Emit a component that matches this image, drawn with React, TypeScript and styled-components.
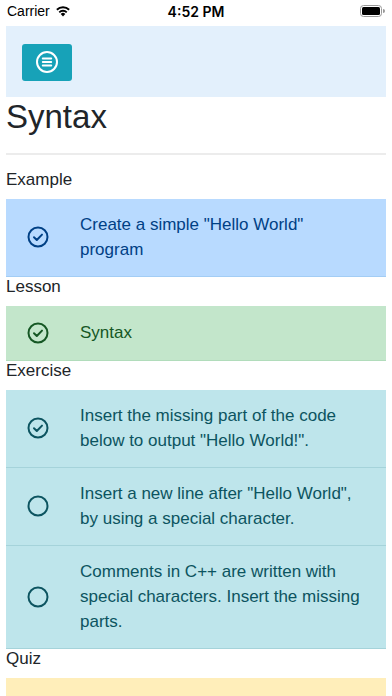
import styled, { createGlobalStyle } from 'styled-components';

const GlobalStyle = createGlobalStyle`
  html, body {
    margin: 0;
    padding: 0;
    background: #ffffff;
  }
  body {
    font-family: 'Liberation Sans', Arial, sans-serif;
    color: #212529;
  }
`;

type Tone = 'primary' | 'success' | 'info' | 'warning';

const tones: Record<Tone, { bg: string; fg: string; line: string }> = {
  primary: { bg: '#b8daff', fg: '#004085', line: '#a3cdf5' },
  success: { bg: '#c3e6cb', fg: '#155724', line: '#b1dcbb' },
  info: { bg: '#bee5eb', fg: '#0c5460', line: '#a5d3da' },
  warning: { bg: '#ffeeba', fg: '#856404', line: '#f5e0a0' },
};

interface Item {
  text: string;
  done?: boolean;
}

const sections: { title: string; tone: Tone; items: Item[] }[] = [
  {
    title: 'Example',
    tone: 'primary',
    items: [{ text: 'Create a simple "Hello World" program', done: true }],
  },
  {
    title: 'Lesson',
    tone: 'success',
    items: [{ text: 'Syntax', done: true }],
  },
  {
    title: 'Exercise',
    tone: 'info',
    items: [
      { text: 'Insert the missing part of the code below to output "Hello World!".', done: true },
      { text: 'Insert a new line after "Hello World", by using a special character.', done: false },
      { text: 'Comments in C++ are written with special characters. Insert the missing parts.', done: false },
    ],
  },
  {
    // still loading: the row is drawn but has no content yet
    title: 'Quiz',
    tone: 'warning',
    items: [{ text: '' }],
  },
];

function WifiIcon() {
  return (
    <svg width="16" height="12" viewBox="0 0 16 12">
      <path d="M8 11.5l2.3-2.6a3.3 3.3 0 0 0-4.6 0z" fill="#000" />
      <path d="M3.6 6.7a6.2 6.2 0 0 1 8.8 0l-1.3 1.4a4.3 4.3 0 0 0-6.2 0z" fill="#000" />
      <path d="M1.2 4.1a9.6 9.6 0 0 1 13.6 0l-1.3 1.4a7.7 7.7 0 0 0-11 0z" fill="#000" />
    </svg>
  );
}

function BatteryIcon() {
  return (
    <svg width="25" height="12" viewBox="0 0 25 12">
      <rect x="0.5" y="0.5" width="21" height="11" rx="3" fill="none" stroke="#999" />
      <rect x="2" y="2" width="18" height="8" rx="1.5" fill="#000" />
      <path d="M23 4v4a2 2 0 0 0 0-4z" fill="#999" />
    </svg>
  );
}

function MenuIcon() {
  return (
    <svg width="24" height="24" viewBox="0 0 24 24" fill="none" stroke="#fff" strokeLinecap="round">
      <circle cx="12" cy="12" r="10" strokeWidth="2" />
      <path d="M7.8 8.5h8.4M7.8 12h8.4M7.8 15.5h8.4" strokeWidth="2" />
    </svg>
  );
}

function StatusIcon({ done, color }: { done: boolean; color: string }) {
  return (
    <svg width="24" height="24" viewBox="0 0 24 24" fill="none" stroke={color} strokeWidth="2" strokeLinecap="round" strokeLinejoin="round">
      <circle cx="12" cy="12" r="9.5" />
      {done && <path d="M8 12.3l2.8 2.7 5.2-5.4" />}
    </svg>
  );
}

function App() {
  return (
    <>
      <GlobalStyle />
      <Screen>
        <StatusBar>
          <Carrier>
            Carrier
            <WifiIcon />
          </Carrier>
          <Clock>4:52 PM</Clock>
          <BatteryBox>
            <BatteryIcon />
          </BatteryBox>
        </StatusBar>

        <Page>
          <TopBar>
            <MenuButton>
              <MenuIcon />
            </MenuButton>
          </TopBar>

          <Title>Syntax</Title>
          <Divider />

          {sections.map((section) => (
            <Section key={section.title}>
              <SectionLabel>{section.title}</SectionLabel>
              <List>
                {section.items.map((item) => (
                  <Row key={item.text} tone={section.tone}>
                    <IconCell>
                      {item.done !== undefined && (
                        <StatusIcon done={item.done} color={tones[section.tone].fg} />
                      )}
                    </IconCell>
                    <RowText>{item.text}</RowText>
                  </Row>
                ))}
              </List>
            </Section>
          ))}
        </Page>
      </Screen>
    </>
  );
}

const Screen = styled.div`
  width: 392px;
  height: 696px;
  overflow: hidden;
  background: #fff;
`;

const StatusBar = styled.div`
  height: 26px;
  display: grid;
  grid-template-columns: 1fr auto 1fr;
  align-items: center;
  padding: 0 7px;
  font-family: 'Liberation Sans', Arial, sans-serif;
  font-size: 14px;
  color: #000;
  box-sizing: border-box;
`;

const Carrier = styled.div`
  display: flex;
  align-items: center;
  gap: 5px;
  margin-top: -4px;

  svg {
    margin-top: -1px;
  }
`;

const Clock = styled.div`
  font-family: Inter, 'Liberation Sans', sans-serif;
  font-weight: 600;
  font-size: 14px;
  margin-top: -4px;
`;

const BatteryBox = styled.div`
  display: flex;
  justify-content: flex-end;
  margin-top: -4px;
`;

const Page = styled.div`
  padding: 0 6px;
`;

const TopBar = styled.div`
  height: 71px;
  background: #e3f0fc;
  display: flex;
  align-items: center;
  padding: 0 16px;
`;

const MenuButton = styled.button`
  width: 50px;
  height: 37px;
  border: none;
  border-radius: 3px;
  background: #17a2b8;
  display: flex;
  align-items: center;
  justify-content: center;
  padding: 0;
  margin-top: 1px;
`;

const Title = styled.h1`
  margin: 0;
  padding-top: 1px;
  font-family: 'Liberation Sans', Arial, sans-serif;
  font-size: 33px;
  font-weight: 400;
  line-height: 38px;
  color: #212529;
`;

const Divider = styled.hr`
  margin: 17px 0 15px;
  border: none;
  border-top: 2px solid #ececec;
`;

const Section = styled.section`
  display: flex;
  flex-direction: column;
`;

const SectionLabel = styled.div`
  font-size: 17px;
  line-height: 20px;
  color: #212529;
  margin-bottom: 9px;
`;

const List = styled.div`
  display: flex;
  flex-direction: column;
`;

interface IRow {
  tone: Tone;
}

const Row = styled.div<IRow>`
  display: flex;
  align-items: center;
  box-sizing: border-box;
  min-height: 55px;
  padding: 13px 0 14px;
  background: ${(props) => tones[props.tone].bg};
  color: ${(props) => tones[props.tone].fg};
  border-bottom: 1px solid ${(props) => tones[props.tone].line};
`;

const IconCell = styled.div`
  width: 74px;
  flex: none;
  display: flex;
  justify-content: center;
  padding-right: 10px;
  box-sizing: border-box;
`;

const RowText = styled.div`
  font-size: 17px;
  line-height: 25px;
  padding-right: 24px;
`;

export default App;
